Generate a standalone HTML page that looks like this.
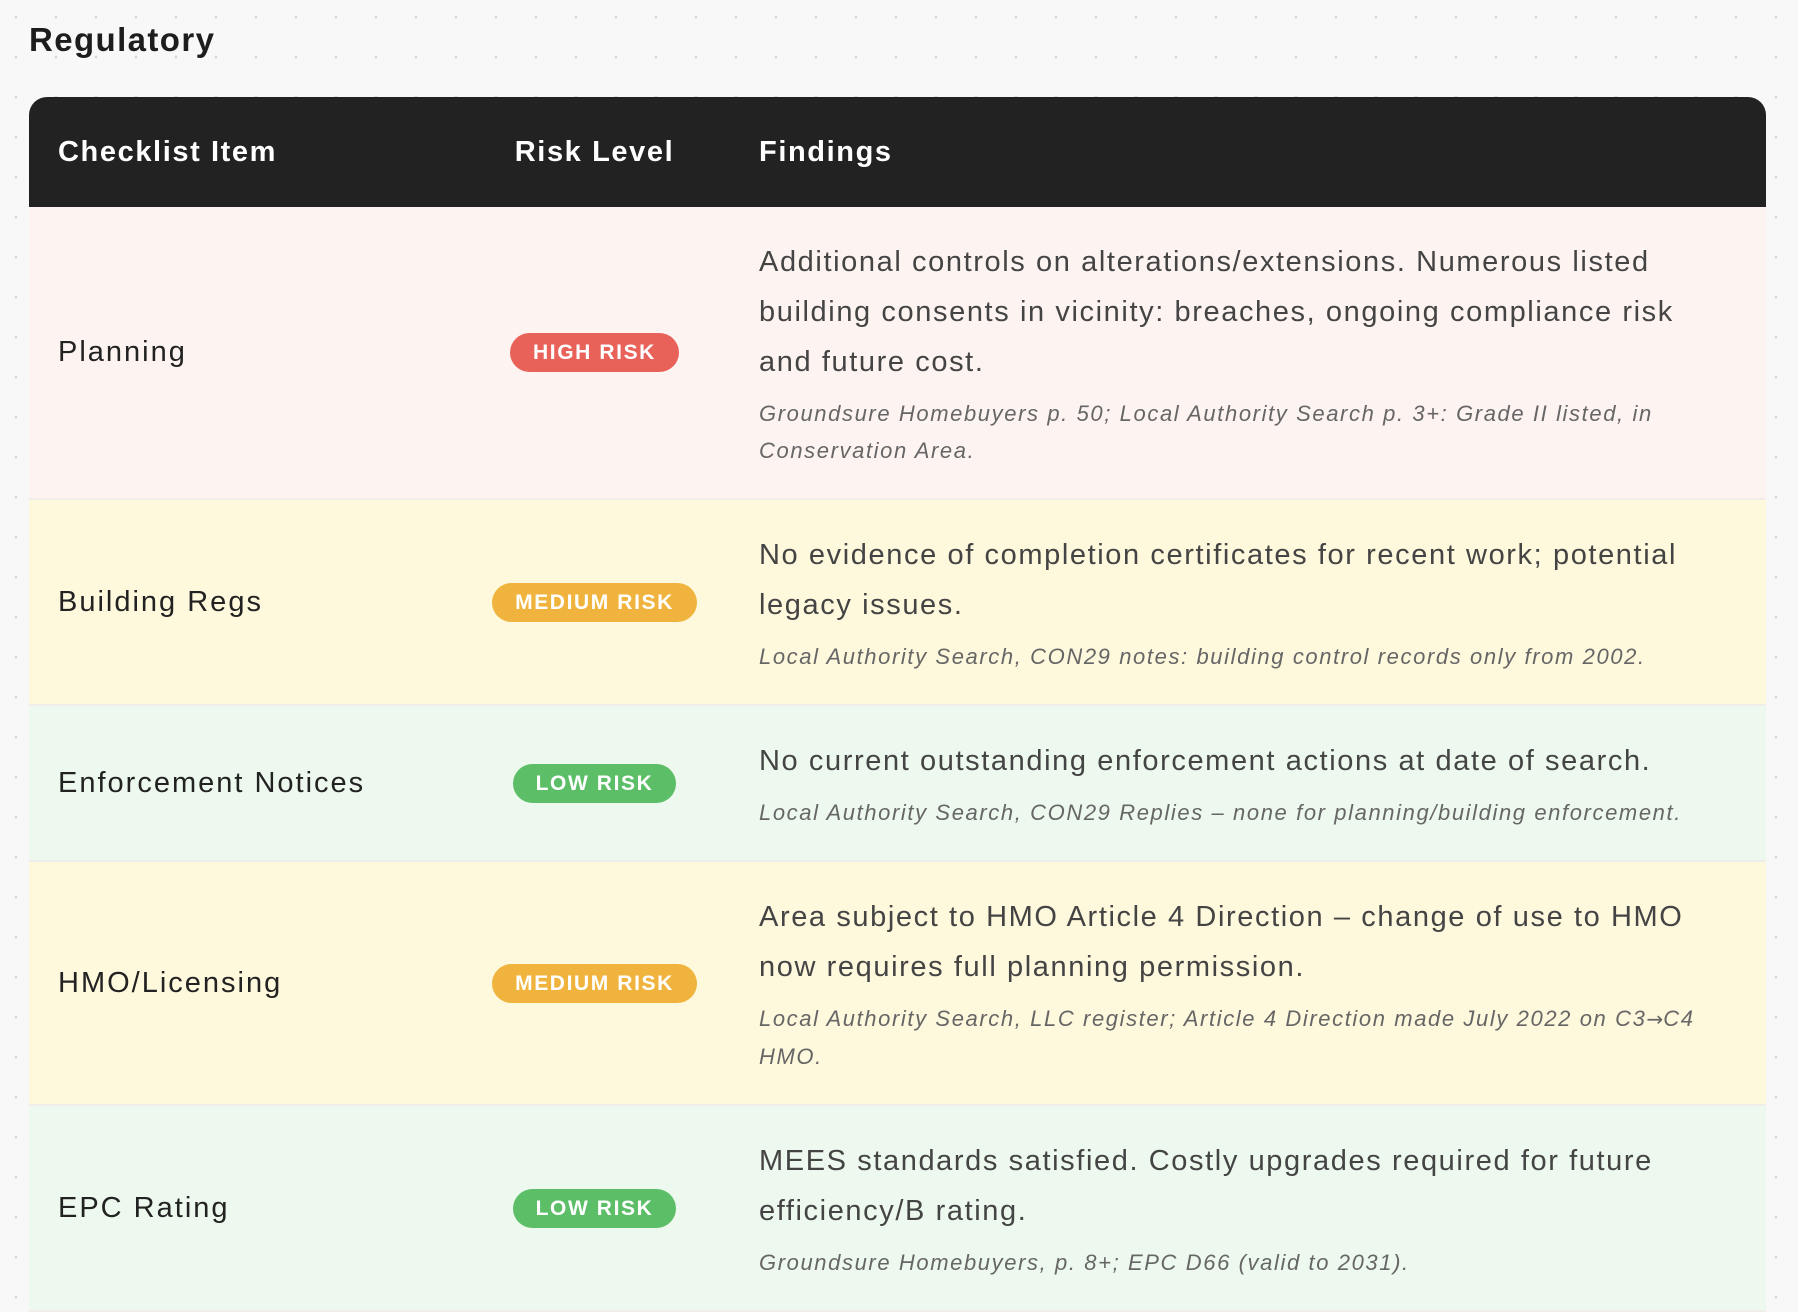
<!DOCTYPE html>
<html><head><meta charset="utf-8"><style>
html,body{margin:0;padding:0}
body{width:1798px;height:1262px;overflow:hidden;background-color:#f7f8f7;
background-image:radial-gradient(circle,#d8dad8 1.2px,transparent 1.6px);background-size:40px 40px;background-position:-4px -3px;
font-family:"Liberation Sans",sans-serif;position:relative}
h1{position:absolute;left:29px;top:20px;margin:0;font-size:33px;font-weight:bold;color:#1d1d1d;line-height:40px;letter-spacing:1.4px}
table{position:absolute;left:29px;top:97px;width:1737px;border-collapse:separate;border-spacing:0;table-layout:fixed}
th{background:#222;color:#fff;font-size:29px;font-weight:bold;text-align:left;height:110px;padding:0;letter-spacing:1.6px}
th:first-child{border-top-left-radius:18px;padding-left:29px}
th:last-child{border-top-right-radius:18px;padding-left:30px}
th.r{text-align:center}
td{padding:0;vertical-align:middle;border-bottom:2px solid #f0eeea}
td.c{padding-left:29px;font-size:29px;color:#222;letter-spacing:2px}
td.r{text-align:center}
td.f{padding:0 30px 0 30px;color:#444}
.m{font-size:29px;line-height:50px;letter-spacing:1.6px}
.s{font-size:22px;line-height:37px;font-style:italic;color:#666;margin-top:8px;letter-spacing:1.6px}
.ar{font-family:"DejaVu Sans",sans-serif;font-style:normal;font-size:20px;letter-spacing:0}
.b{display:inline-block;color:#fff;font-weight:bold;font-size:21px;letter-spacing:1.6px;height:39px;line-height:39px;border-radius:20px;padding:0 23px}
.hi{background:#e8625a}.me{background:#f0b43e}.lo{background:#5cbf67}
tr.p td{background:#fdf4f2}tr.y td{background:#fef8dc}tr.g td{background:#edf9ee}
</style></head><body>
<h1>Regulatory</h1>
<table>
<colgroup><col style="width:431px"><col style="width:269px"><col></colgroup>
<tr><th>Checklist Item</th><th class="r">Risk Level</th><th>Findings</th></tr>
<tr class="p" style="height:293px"><td class="c">Planning</td><td class="r"><span class="b hi">HIGH RISK</span></td><td class="f"><div class="m">Additional controls on alterations/extensions. Numerous listed building consents in vicinity: breaches, ongoing compliance risk and future cost.</div><div class="s">Groundsure Homebuyers p. 50; Local Authority Search p. 3+: Grade II listed, in Conservation Area.</div></td></tr>
<tr class="y" style="height:206px"><td class="c">Building Regs</td><td class="r"><span class="b me">MEDIUM RISK</span></td><td class="f"><div class="m">No evidence of completion certificates for recent work; potential legacy issues.</div><div class="s">Local Authority Search, CON29 notes: building control records only from 2002.</div></td></tr>
<tr class="g" style="height:156px"><td class="c">Enforcement Notices</td><td class="r"><span class="b lo">LOW RISK</span></td><td class="f"><div class="m">No current outstanding enforcement actions at date of search.</div><div class="s">Local Authority Search, CON29 Replies – none for planning/building enforcement.</div></td></tr>
<tr class="y" style="height:244px"><td class="c">HMO/Licensing</td><td class="r"><span class="b me">MEDIUM RISK</span></td><td class="f"><div class="m">Area subject to HMO Article 4 Direction – change of use to HMO now requires full planning permission.</div><div class="s">Local Authority Search, LLC register; Article 4 Direction made July 2022 on C3<span class="ar">→</span>C4 HMO.</div></td></tr>
<tr class="g" style="height:206px"><td class="c">EPC Rating</td><td class="r"><span class="b lo">LOW RISK</span></td><td class="f"><div class="m">MEES standards satisfied. Costly upgrades required for future efficiency/B rating.</div><div class="s">Groundsure Homebuyers, p. 8+; EPC D66 (valid to 2031).</div></td></tr>
</table>
</body></html>
